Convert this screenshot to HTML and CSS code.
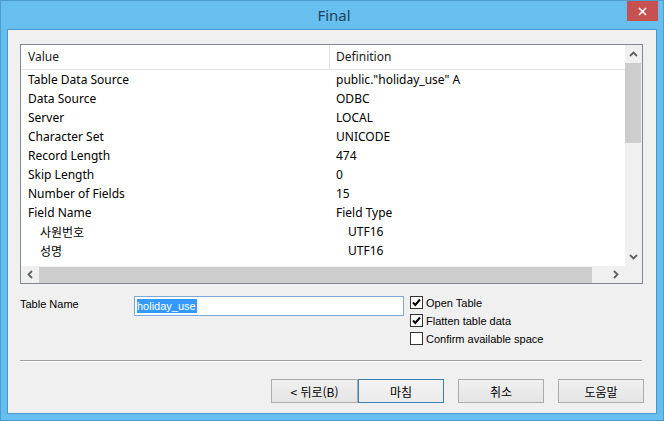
FILE: index.html
```html
<!DOCTYPE html>
<html lang="ko">

<head>
    <meta charset="UTF-8">
    <meta name="viewport" content="width=device-width, initial-scale=1.0">
    <title>Final</title>
    <link rel="stylesheet" href="styles.css">
</head>

<body>
    <div class="window">
        <div class="titlebar">
            <span></span>
            <div class="title">Final</div>
            <button class="close">
                <svg width="9" height="9" viewBox="0 0 9 9"><path d="M1 1L8 8M8 1L1 8" stroke="#fff" stroke-width="1.6"/></svg>
            </button>
        </div>

        <div class="content">
            <div class="list">
                <div class="list-view">
                    <div class="row header">
                        <div class="col-value">Value</div>
                        <div class="col-def">Definition</div>
                    </div>
                    <div class="row"><div class="col-value">Table Data Source</div><div class="col-def">public."holiday_use" A</div></div>
                    <div class="row"><div class="col-value">Data Source</div><div class="col-def">ODBC</div></div>
                    <div class="row"><div class="col-value">Server</div><div class="col-def">LOCAL</div></div>
                    <div class="row"><div class="col-value">Character Set</div><div class="col-def">UNICODE</div></div>
                    <div class="row"><div class="col-value">Record Length</div><div class="col-def">474</div></div>
                    <div class="row"><div class="col-value">Skip Length</div><div class="col-def">0</div></div>
                    <div class="row"><div class="col-value">Number of Fields</div><div class="col-def">15</div></div>
                    <div class="row"><div class="col-value">Field Name</div><div class="col-def">Field Type</div></div>
                    <div class="row sub"><div class="col-value">사원번호</div><div class="col-def">UTF16</div></div>
                    <div class="row sub"><div class="col-value">성명</div><div class="col-def">UTF16</div></div>
                    <div class="row sub partial"><div class="col-value">부서코드</div><div class="col-def"></div></div>
                </div>

                <div class="vscroll">
                    <div class="arrow">
                        <svg width="9" height="6" viewBox="0 0 9 6"><path d="M1 5L4.5 1.5L8 5" stroke="#606060" stroke-width="1.8" fill="none"/></svg>
                    </div>
                    <div class="vthumb"></div>
                    <div class="vtrack"></div>
                    <div class="arrow">
                        <svg width="9" height="6" viewBox="0 0 9 6"><path d="M1 1L4.5 4.5L8 1" stroke="#606060" stroke-width="1.8" fill="none"/></svg>
                    </div>
                </div>

                <div class="hscroll">
                    <div class="arrow">
                        <svg width="6" height="9" viewBox="0 0 6 9"><path d="M5 1L1.5 4.5L5 8" stroke="#606060" stroke-width="1.8" fill="none"/></svg>
                    </div>
                    <div class="hthumb"></div>
                    <div class="htrack"></div>
                    <div class="arrow">
                        <svg width="6" height="9" viewBox="0 0 6 9"><path d="M1 1L4.5 4.5L1 8" stroke="#606060" stroke-width="1.8" fill="none"/></svg>
                    </div>
                </div>

                <div class="corner"></div>
            </div>

            <div class="options">
                <div class="label">Table Name</div>
                <div class="input"><span class="selected">holiday_use</span></div>
                <div class="checks">
                    <label class="check">
                        <span class="box">
                            <svg width="11" height="11" viewBox="0 0 11 11"><path d="M2 5.5L4.3 8L9 2.5" stroke="#000" stroke-width="2" fill="none"/></svg>
                        </span>
                        Open Table
                    </label>
                    <label class="check">
                        <span class="box">
                            <svg width="11" height="11" viewBox="0 0 11 11"><path d="M2 5.5L4.3 8L9 2.5" stroke="#000" stroke-width="2" fill="none"/></svg>
                        </span>
                        Flatten table data
                    </label>
                    <label class="check">
                        <span class="box"></span>
                        Confirm available space
                    </label>
                </div>
            </div>

            <div class="separator"></div>

            <div class="buttons">
                <button class="btn back">&lt; 뒤로(B)</button>
                <button class="btn default">마침</button>
                <button class="btn">취소</button>
                <button class="btn">도움말</button>
            </div>
        </div>
    </div>
</body>

</html>
```

FILE: styles.css
```css
*,
*::before,
*::after {
    box-sizing: border-box;
}

body {
    margin: 0;
    padding: 0;
    font-family: "Noto Sans", "Noto Sans CJK KR", sans-serif;
    background: #67bff0;
}

.window {
    width: 664px;
    height: 421px;
    background: #67bfef;
    border: 1px solid #4c9dd0;
    padding: 0 6px 6px;
    display: flex;
    flex-direction: column;
}

.titlebar {
    height: 28px;
    display: grid;
    grid-template-columns: 1fr auto 1fr;
}

.title {
    font-size: 15px;
    color: #21435c;
    line-height: 28px;
    padding-left: 4px;
}

.close {
    justify-self: end;
    width: 31px;
    height: 20px;
    margin-right: -1px;
    border: none;
    padding: 0;
    background: #c75050;
    display: flex;
    align-items: center;
    justify-content: center;
}

.content {
    flex: 1;
    background: #f0f0f0;
    border: 1px solid #4c98cc;
    padding: 14px 13px 0 12px;
}

/* list view */
.list {
    width: 623px;
    height: 240px;
    border: 1px solid #828790;
    display: grid;
    grid-template-columns: 1fr 17px;
    grid-template-rows: 1fr 17px;
}

.list-view {
    background: #fff;
    overflow: hidden;
    font-size: 12px;
    color: #000;
}

.row {
    display: flex;
    height: 19px;
    line-height: 19px;
    white-space: nowrap;
}

.row.header {
    height: 25px;
    line-height: 24px;
    border-bottom: 1px solid #e5e5e5;
    color: #1a1a1a;
}

.col-value {
    width: 309px;
    padding-left: 7px;
}

.col-def {
    flex: 1;
    padding-left: 6px;
}

.header .col-value {
    border-right: 1px solid #e5e5e5;
}

.sub .col-value {
    padding-left: 19px;
    font-family: "Noto Sans CJK KR", sans-serif;
}

.sub .col-def {
    padding-left: 18px;
}

/* last row only peeks out above the scrollbar */
.row.partial {
    line-height: 23px;
}

.vscroll,
.hscroll {
    background: #f0f0f0;
    display: flex;
}

.vscroll {
    flex-direction: column;
}

.vscroll .arrow {
    height: 18px;
    display: flex;
    align-items: center;
    justify-content: center;
}

.vthumb {
    height: 80px;
    background: #cdcdcd;
    margin-right: 1px;
}

.vtrack {
    flex: 1;
}

.hscroll .arrow {
    width: 18px;
    display: flex;
    align-items: center;
    justify-content: center;
}

.hthumb {
    width: 553px;
    background: #cdcdcd;
    margin: 1px 0 0;
}

.htrack {
    flex: 1;
}

.corner {
    background: #f0f0f0;
}

/* options */
.options {
    display: flex;
    margin-top: 12px;
    height: 64px;
    font-family: "Liberation Sans", Arial, sans-serif;
    font-size: 11px;
}

.label {
    width: 114px;
    padding-top: 2px;
}

.input {
    width: 270px;
    height: 20px;
    background: #fff;
    border: 1px solid #7ea6d8;
    padding: 2px 0 0 2px;
}

.selected {
    background: #3399ff;
    color: #fff;
    display: inline-block;
    line-height: 14px;
    padding-right: 1px;
}

.checks {
    margin-left: 6px;
    display: flex;
    flex-direction: column;
    gap: 5px;
}

.check {
    display: flex;
    align-items: center;
    gap: 3px;
    height: 13px;
    line-height: 12px;
}

.box {
    width: 13px;
    height: 13px;
    border: 1px solid #333;
    background: #fff;
    display: flex;
    align-items: center;
    justify-content: center;
}

.separator {
    width: 622px;
    border-top: 1px solid #a0a0a0;
    border-bottom: 1px solid #fff;
}

/* buttons */
.buttons {
    display: flex;
    justify-content: flex-end;
    gap: 14px;
    margin-top: 17px;
    margin-right: -1px;
}

.btn {
    width: 86px;
    height: 24px;
    border: 1px solid #acacac;
    background: linear-gradient(to bottom, #f0f0f0, #e5e5e5);
    font-family: "Noto Sans CJK KR", sans-serif;
    font-size: 12px;
    color: #000;
    padding: 0;
}

.btn.back {
    margin-right: -14px;
    width: 87px;
}

.btn.default {
    border-color: #3c7fb1;
    background: linear-gradient(to bottom, #f2f2f2, #ebebeb);
}
```
